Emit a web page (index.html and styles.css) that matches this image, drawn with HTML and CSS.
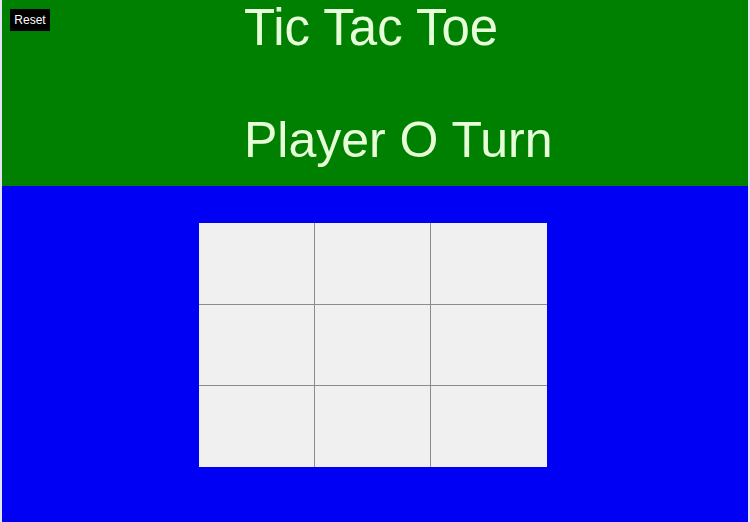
FILE: index.html
```html
<!DOCTYPE html>
<html>
<head>
<meta charset="utf-8">
<title>Tic Tac Toe</title>
<link rel="stylesheet" href="styles.css">
</head>
<body>
<div class="page">
  <header class="top">
    <button class="reset">Reset</button>
    <h1 class="title">Tic Tac Toe</h1>
    <h2 class="status">Player O Turn</h2>
  </header>
  <main class="play">
    <div class="board">
      <div class="cell"></div>
      <div class="cell"></div>
      <div class="cell"></div>
      <div class="cell"></div>
      <div class="cell"></div>
      <div class="cell"></div>
      <div class="cell"></div>
      <div class="cell"></div>
      <div class="cell"></div>
    </div>
  </main>
</div>
</body>
</html>
```
FILE: styles.css
```css
html, body {
  margin: 0;
  padding: 0;
  height: 100%;
}
body {
  background: #e4e4f4;
  font-family: "Liberation Sans", Arial, sans-serif;
}
.page {
  margin: 0 2px;
  height: 522px;
  display: flex;
  flex-direction: column;
}
.top {
  position: relative;
  background: #008000;
  height: 186px;
  padding-left: 242px;
  box-sizing: border-box;
  overflow: hidden;
}
.reset {
  position: absolute;
  left: 8px;
  top: 9px;
  width: 40px;
  height: 22px;
  padding: 0;
  border: none;
  background: #000;
  color: #fff;
  font-family: "Liberation Sans", Arial, sans-serif;
  font-size: 12px;
}
.title {
  margin: 0;
  font-size: 51px;
  line-height: 56px;
  font-weight: normal;
  color: #e6ffd8;
}
.status {
  margin: 55px 0 0 0;
  font-size: 50px;
  line-height: 58px;
  font-weight: normal;
  color: #e6ffd8;
}
.play {
  flex: 1;
  background: #0000f5;
  padding: 37px 0 0 197px;
}
.board {
  display: grid;
  grid-template-columns: 115px 115px 116px;
  grid-template-rows: 81px 80px 81px;
  gap: 1px;
  width: 348px;
  background: #8c8c8c;
}
.cell {
  background: #f0f0f0;
}
```
